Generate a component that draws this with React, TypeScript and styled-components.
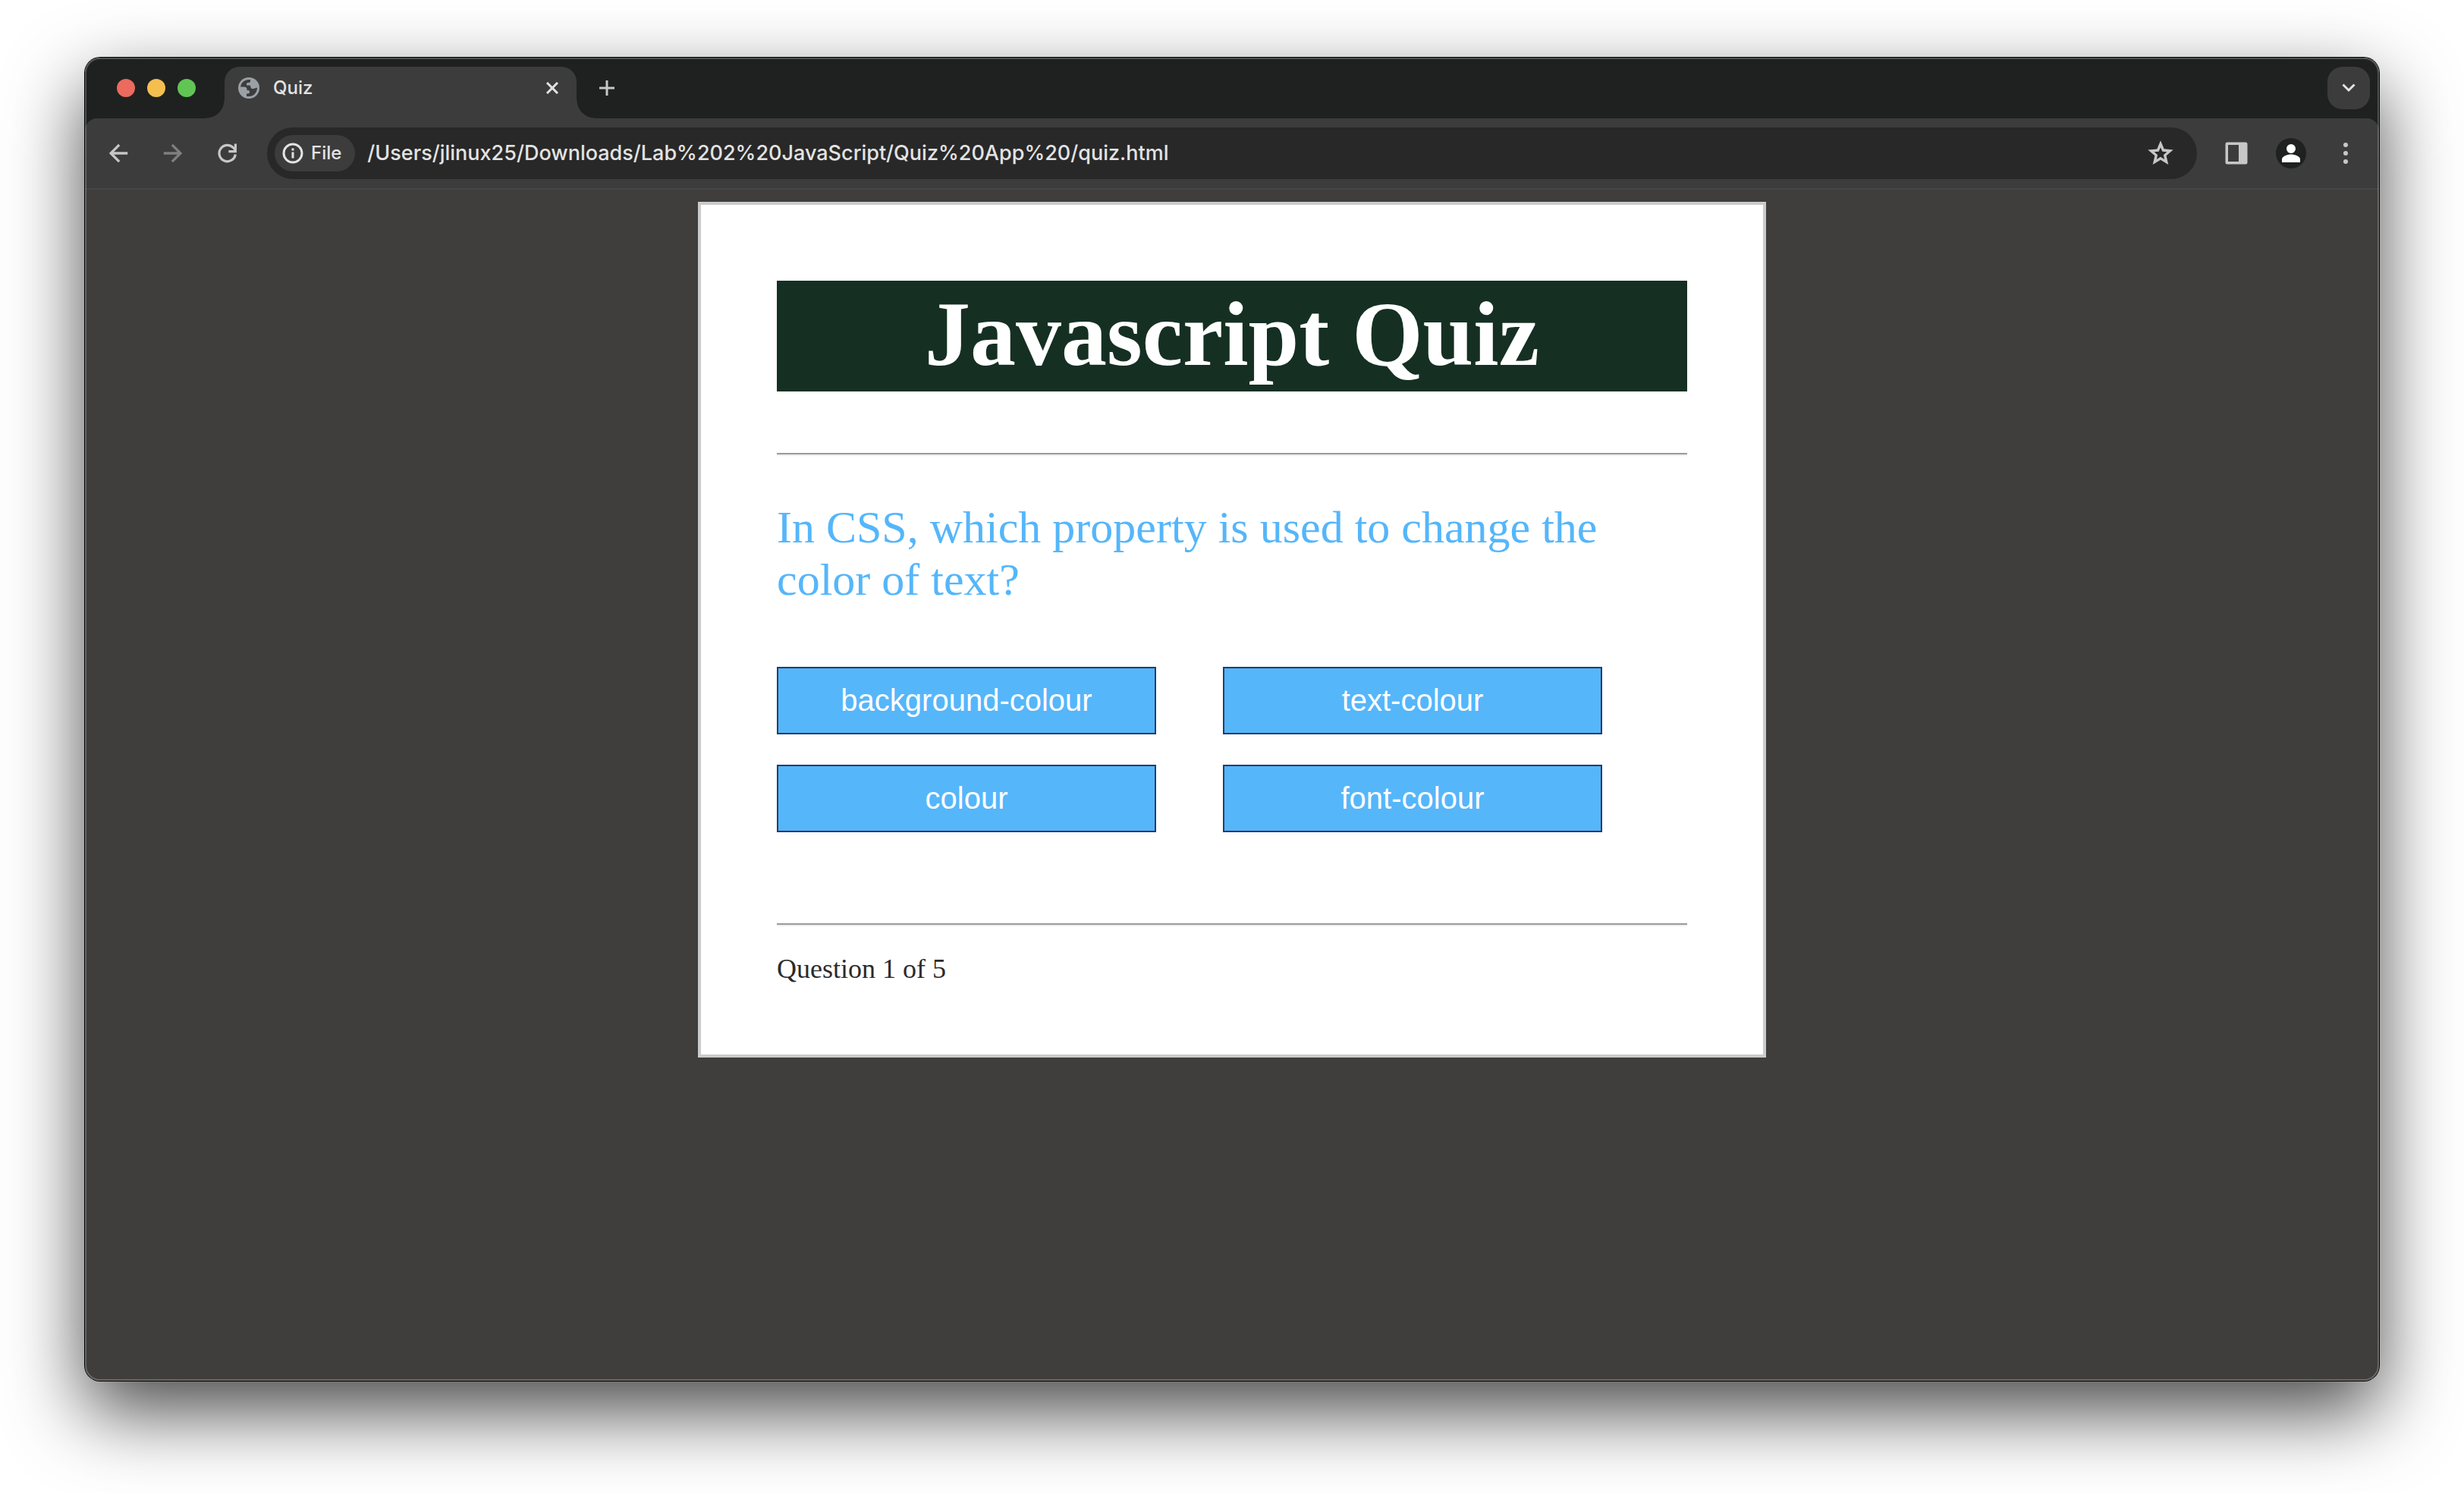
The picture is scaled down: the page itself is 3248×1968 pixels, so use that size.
import React, { useState } from "react";
import styled, { createGlobalStyle, css } from "styled-components";

const uiFont = `Inter, Roboto, "Liberation Sans", sans-serif`;

const GlobalStyle = createGlobalStyle`
  *, *::before, *::after { box-sizing: border-box; }
  body { margin: 0; background: #ffffff; }
  button, input { font: inherit; color: inherit; }
  button { cursor: pointer; }
  svg { display: block; }
`;

const Desktop = styled.div`
  display: flex;
  min-height: 100vh;
  padding: 76px 112px 148px;
`;

const BrowserWindow = styled.div`
  position: relative;
  display: flex;
  flex: 1;
  flex-direction: column;
  min-width: 0;
  overflow: hidden;
  border-radius: 20px;
  background: #1f2120;
`;

const WindowShadow = styled.div`
  display: flex;
  flex: 1;
  min-width: 0;
  border-radius: 20px;
  box-shadow: 0 0 0 1px #000000, 0 40px 100px rgba(0, 0, 0, 0.72);
`;

/* Thin light rim drawn over the edge of the window */
const WindowRim = styled.div`
  position: absolute;
  inset: 0;
  border: 2px solid rgba(255, 255, 255, 0.22);
  border-radius: 20px;
  pointer-events: none;
`;

const TabStrip = styled.div`
  display: flex;
  align-items: center;
  height: 80px;
  padding: 0 12px 0 42px;
  color: #e3e3e3;
  font: 500 24px/32px ${uiFont};
`;

const TrafficLights = styled.div`
  display: flex;
  gap: 16px;
`;

const Light = styled.button<{ $color: string }>`
  width: 24px;
  height: 24px;
  padding: 0;
  border: 0;
  border-radius: 50%;
  background: ${(p) => p.$color};
`;

const foot = css`
  content: "";
  position: absolute;
  bottom: 0;
  width: 24px;
  height: 24px;
`;

const Tab = styled.div`
  position: relative;
  display: flex;
  align-items: center;
  align-self: flex-end;
  gap: 18px;
  width: 464px;
  height: 68px;
  margin-left: 38px;
  padding: 0 24px 12px 18px;
  border-radius: 20px 20px 0 0;
  background: #3c3c3c;

  &::before {
    ${foot}
    left: -24px;
    background: radial-gradient(circle at 0 0, transparent 23px, #3c3c3c 24px);
  }

  &::after {
    ${foot}
    right: -24px;
    background: radial-gradient(circle at 100% 0, transparent 23px, #3c3c3c 24px);
  }
`;

const TabTitle = styled.span`
  flex: 1;
`;

const IconButton = styled.button<{ $filled?: boolean; $color?: string }>`
  display: flex;
  flex: none;
  align-items: center;
  justify-content: center;
  width: 56px;
  height: 56px;
  padding: 0;
  border: 0;
  border-radius: 20px;
  background: ${(p) => (p.$filled ? "#3c3c3c" : "transparent")};
  color: ${(p) => p.$color ?? "#c7c7c7"};
`;

const CloseButton = styled(IconButton)`
  width: 16px;
  height: 16px;
  color: #e3e3e3;
`;

const StripSpacer = styled.div`
  flex: 1;
  min-width: 12px;
`;

const NewTab = styled(IconButton)`
  margin-left: 12px;
`;

const Toolbar = styled.div`
  display: flex;
  align-items: center;
  gap: 24px;
  height: 94px;
  padding: 0 16px;
  border-bottom: 2px solid #474747;
  border-radius: 16px 16px 0 0;
  background: #3c3c3c;
`;

const ToolGroup = styled.div`
  display: flex;
  gap: 16px;
`;

const AddressBar = styled.div`
  display: flex;
  flex: 1;
  align-items: center;
  gap: 16px;
  min-width: 0;
  height: 68px;
  padding: 0 20px 0 10px;
  border-radius: 34px;
  background: #282828;
  color: #e3e3e3;
`;

const SchemeChip = styled.button`
  display: flex;
  flex: none;
  align-items: center;
  gap: 10px;
  height: 48px;
  padding: 0 18px 0 10px;
  border: 0;
  border-radius: 24px;
  background: #3c3c3c;
  font: 500 24px/32px ${uiFont};
`;

const AddressInput = styled.input`
  flex: 1;
  min-width: 0;
  padding: 0;
  border: 0;
  outline: 0;
  background: transparent;
  font: 500 27px/36px ${uiFont};
`;

const Avatar = styled.span`
  display: flex;
  align-items: center;
  justify-content: center;
  width: 40px;
  height: 40px;
  border-radius: 50%;
  background: #1f2120;
  color: #ffffff;
`;

const Page = styled.main`
  display: flex;
  flex: 1;
  align-items: flex-start;
  justify-content: center;
  padding: 16px;
  background: #3f3e3c;
`;

const Card = styled.section`
  width: 100%;
  max-width: 1408px;
  padding: 100px 100px 92px;
  border: 4px solid #cbcbcb;
  background: #ffffff;
  font-family: "Liberation Serif", "Times New Roman", serif;
`;

const Title = styled.h1`
  margin: 0;
  padding-bottom: 4px;
  background: #153023;
  color: #ffffff;
  font-size: 120px;
  line-height: 142px;
  text-align: center;
`;

const Rule = styled.hr<{ $above: number; $below: number }>`
  height: 4px;
  margin: ${(p) => p.$above}px 0 ${(p) => p.$below}px;
  border: solid;
  border-width: 2px 0;
  border-color: #9a9a9a transparent #eeeeee;
`;

const Question = styled.p`
  margin: 0;
  color: #55b6fa;
  font-size: 60px;
  line-height: 69px;
`;

const Answers = styled.div`
  display: grid;
  grid-template-columns: repeat(2, 500px);
  gap: 40px 88px;
  margin-top: 80px;
`;

const Answer = styled.button`
  height: 89px;
  padding: 0 20px 2px;
  border: 2px solid #233c6c;
  background: #55b6fa;
  color: #ffffff;
  font: 400 40px/46px "Liberation Sans", Arial, sans-serif;
`;

const Progress = styled.p`
  margin: 0;
  color: #2b2b2b;
  font-size: 36px;
  line-height: 42px;
`;

const GlobeIcon = () => (
  <svg width="28" height="28" viewBox="0 0 28 28" aria-hidden="true">
    <circle cx="14" cy="14" r="14" fill="#9aa0a6" />
    <path
      fill="#3c3c3c"
      d="M3 12.500A11.100 11.100 0 0 1 16 3.100V5Q16 7 14 7H12.500Q11 7 11 8.500V10.500H14.500Q16.500 10.500 16.500 12.500V13.500Q17.500 15.500 20 15L25 13.500A11.100 11.100 0 0 1 11 24.700V21.500H12.500Q15 21.500 15 19V18.500Q15 17 13 17H11.500V15Q11 12.500 8.500 12.500Z"
    />
  </svg>
);

const CloseIcon = () => (
  <svg width="16" height="16" viewBox="0 0 16 16" fill="none" stroke="currentColor" strokeWidth="3" aria-hidden="true">
    <path d="M1 1l14 14M15 1L1 15" />
  </svg>
);

const PlusIcon = () => (
  <svg width="20" height="20" viewBox="0 0 20 20" fill="none" stroke="currentColor" strokeWidth="3" aria-hidden="true">
    <path d="M10 0v20M0 10h20" />
  </svg>
);

const ChevronIcon = () => (
  <svg width="20" height="12" viewBox="0 0 20 12" fill="none" stroke="#e3e3e3" strokeWidth="3" aria-hidden="true">
    <path d="M2.500 1.500l7.500 7.500 7.500-7.500" />
  </svg>
);

const BackIcon = () => (
  <svg width="36" height="36" viewBox="0 0 24 24" fill="currentColor" stroke="currentColor" strokeWidth="0.3" aria-hidden="true">
    <path d="M20 11H7.830l5.590-5.590L12 4l-8 8 8 8 1.410-1.410L7.830 13H20z" />
  </svg>
);

const ForwardIcon = () => (
  <svg width="36" height="36" viewBox="0 0 24 24" fill="currentColor" stroke="currentColor" strokeWidth="0.3" aria-hidden="true">
    <path d="M12 4l-1.410 1.410L16.170 11H4v2h12.170l-5.580 5.590L12 20l8-8z" />
  </svg>
);

const ReloadIcon = () => (
  <svg width="28" height="28" viewBox="0 0 28 28" fill="none" stroke="currentColor" strokeWidth="3.2" aria-hidden="true">
    <path d="M24.300 15.500A10.700 10.700 0 1 1 21.500 6.700L24.500 10" />
    <path d="M24.400 1.500v10.100H15.300" />
  </svg>
);

const InfoIcon = () => (
  <svg width="28" height="28" viewBox="0 0 28 28" fill="none" stroke="currentColor" strokeWidth="3" aria-hidden="true">
    <circle cx="14" cy="14" r="12" />
    <path d="M14 12.500v8M14 7.500v3" />
  </svg>
);

const StarIcon = () => (
  <svg width="40" height="40" viewBox="0 0 24 24" fill="currentColor" aria-hidden="true">
    <path
      fillRule="evenodd"
      d="M22 9.240l-7.190-.62L12 2 9.190 8.630 2 9.240l5.460 4.730L5.820 21 12 17.270 18.180 21l-1.630-7.030zM12 7.300l1.400 3.300 3.600.3-2.700 2.400.8 3.500-3.100-1.900-3.100 1.900.8-3.500-2.700-2.400 3.600-.3z"
    />
  </svg>
);

const SidePanelIcon = () => (
  <svg width="30" height="30" viewBox="0 0 30 30" fill="currentColor" aria-hidden="true">
    <path fillRule="evenodd" d="M3 .500h24a2.500 2.500 0 0 1 2.500 2.500v24a2.500 2.500 0 0 1-2.500 2.500H3A2.500 2.500 0 0 1 .500 27V3A2.500 2.500 0 0 1 3 .500zM4 4v22h14V4z" />
  </svg>
);

const PersonIcon = () => (
  <svg width="24" height="24" viewBox="0 0 24 24" fill="currentColor" aria-hidden="true">
    <circle cx="12" cy="6" r="6" />
    <path d="M0 24v-4c0-4 7-6.500 12-6.500S24 16 24 20v4z" />
  </svg>
);

const DotsIcon = () => (
  <svg width="8" height="28" viewBox="0 0 8 28" fill="currentColor" aria-hidden="true">
    <circle cx="4" cy="3" r="3" />
    <circle cx="4" cy="14" r="3" />
    <circle cx="4" cy="25" r="3" />
  </svg>
);

const lights = [
  { label: "Close window", color: "#ec6a5e" },
  { label: "Minimize window", color: "#f4bf4f" },
  { label: "Zoom window", color: "#61c554" },
];

const answers = ["background-colour", "text-colour", "colour", "font-colour"];

export default function App() {
  const [address, setAddress] = useState(
    "/Users/jlinux25/Downloads/Lab%202%20JavaScript/Quiz%20App%20/quiz.html"
  );

  return (
    <Desktop>
      <GlobalStyle />
      <WindowShadow>
        <BrowserWindow>
          <TabStrip>
            <TrafficLights>
              {lights.map((l) => (
                <Light key={l.label} $color={l.color} aria-label={l.label} />
              ))}
            </TrafficLights>
            <Tab>
              <GlobeIcon />
              <TabTitle>Quiz</TabTitle>
              <CloseButton aria-label="Close tab">
                <CloseIcon />
              </CloseButton>
            </Tab>
            <NewTab aria-label="New tab">
              <PlusIcon />
            </NewTab>
            <StripSpacer />
            <IconButton $filled aria-label="Search tabs">
              <ChevronIcon />
            </IconButton>
          </TabStrip>

          <Toolbar>
            <ToolGroup>
              <IconButton aria-label="Back">
                <BackIcon />
              </IconButton>
              <IconButton $color="#7f7f7f" aria-label="Forward">
                <ForwardIcon />
              </IconButton>
              <IconButton aria-label="Reload">
                <ReloadIcon />
              </IconButton>
            </ToolGroup>
            <AddressBar>
              <SchemeChip>
                <InfoIcon />
                File
              </SchemeChip>
              <AddressInput
                aria-label="Address"
                value={address}
                onChange={(e) => setAddress(e.target.value)}
              />
              <IconButton aria-label="Bookmark this page">
                <StarIcon />
              </IconButton>
            </AddressBar>
            <ToolGroup>
              <IconButton aria-label="Side panel">
                <SidePanelIcon />
              </IconButton>
              <IconButton aria-label="Profile">
                <Avatar>
                  <PersonIcon />
                </Avatar>
              </IconButton>
              <IconButton aria-label="Menu">
                <DotsIcon />
              </IconButton>
            </ToolGroup>
          </Toolbar>

          <Page>
            <Card>
              <Title>Javascript Quiz</Title>
              <Rule $above={81} $below={60} />
              <Question>In CSS, which property is used to change the color of text?</Question>
              <Answers>
                {answers.map((a) => (
                  <Answer key={a}>{a}</Answer>
                ))}
              </Answers>
              <Rule $above={120} $below={35} />
              <Progress>Question 1 of 5</Progress>
            </Card>
          </Page>
          <WindowRim />
        </BrowserWindow>
      </WindowShadow>
    </Desktop>
  );
}
